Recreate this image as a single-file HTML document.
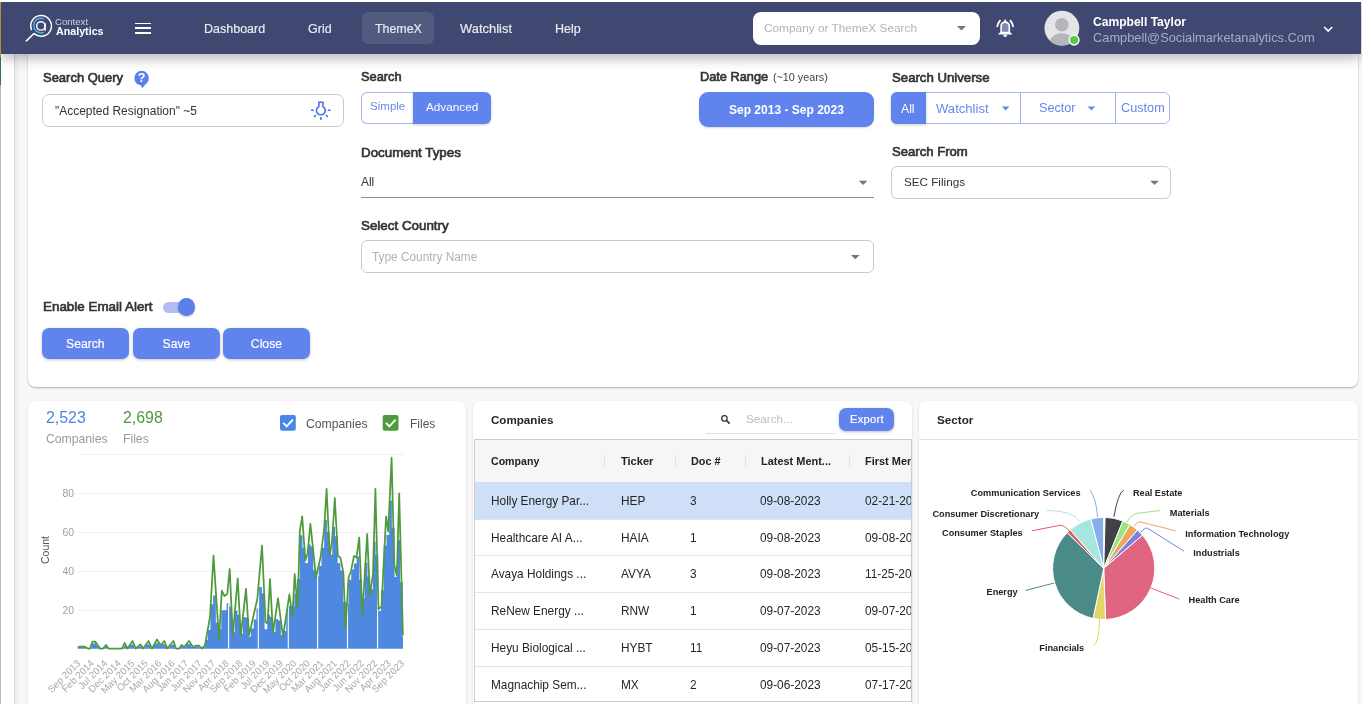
<!DOCTYPE html>
<html><head><meta charset="utf-8">
<style>
*{box-sizing:border-box;margin:0;padding:0}
html,body{width:1362px;height:704px;overflow:hidden}
body{position:relative;background:#f8f8f8;font-family:"Liberation Sans",sans-serif;color:#333}
.a{position:absolute}
.t{position:absolute;line-height:1;white-space:nowrap;will-change:transform}
.m{-webkit-text-stroke:0.18px currentColor}
.card{position:absolute;background:#fff;border-radius:8px;box-shadow:0 1px 3px rgba(0,0,0,0.12)}
svg{position:absolute;left:0;top:0;overflow:visible;will-change:transform}
</style></head><body>

<div class="a" style="left:0px;top:0px;width:1px;height:704px;background:#b9b9b9"></div>
<div class="a" style="left:0px;top:2px;width:1px;height:55px;background:#c9a640"></div>
<div class="a" style="left:0px;top:57px;width:1px;height:28px;background:#2e7a4a"></div>
<div class="a" style="left:1px;top:0px;width:13px;height:704px;background:#fff"></div>
<div class="a" style="left:14px;top:0px;width:1px;height:704px;background:#dcdcdc"></div>
<div class="a" style="left:15px;top:0px;width:13px;height:704px;background:linear-gradient(90deg,#ececec,#f5f5f5 35%,#f8f8f8)"></div>
<div class="card" style="left:28px;top:30px;width:1330px;height:357px;box-shadow:0 1px 2px rgba(0,0,0,0.3)"></div>
<div class="card" style="left:28px;top:401px;width:438px;height:320px"></div>
<div class="card" style="left:473px;top:401px;width:439px;height:320px"></div>
<div class="card" style="left:919px;top:401px;width:439px;height:320px"></div>
<div class="a" style="left:1px;top:2px;width:1360px;height:52px;background:#404872;box-shadow:0 3px 13px rgba(0,0,0,0.33)"></div>
<div class="a" style="left:0px;top:0px;width:1362px;height:2px;background:#fff"></div>
<svg width="1362" height="704" style="pointer-events:none">
<path d="M31.66,30.14 A10.35,10.35 0 1 1 34.21,33.63" fill="none" stroke="#fff" stroke-width="1.45"/>
<path d="M44.07,32.27 A7.3,7.3 0 1 1 44.07,18.93" fill="none" stroke="#4fb0f0" stroke-width="1.5"/>
<circle cx="40.9" cy="25.9" r="4.2" fill="none" stroke="#fff" stroke-width="1.45"/>
<path d="M45.1,23.2 V30.8" stroke="#fff" stroke-width="1.45"/>
<path d="M34.0,33.5 L26.4,40.9" stroke="#fff" stroke-width="1.6" stroke-linecap="round"/>
</svg>
<div class="t " style="left:55.20px;top:17.27px;font-size:9.6px;color:#cfd1de;">Context</div>
<div class="t " style="left:55.50px;top:26.24px;font-size:10.7px;color:#ffffff;font-weight:700;">Analytics</div>
<div class="a" style="left:135px;top:22.6px;width:16px;height:1.9px;background:#fff"></div>
<div class="a" style="left:135px;top:27.4px;width:16px;height:1.9px;background:#fff"></div>
<div class="a" style="left:135px;top:31.9px;width:16px;height:1.9px;background:#fff"></div>
<div class="a" style="left:362px;top:12px;width:72px;height:32px;background:rgba(255,255,255,0.1);border-radius:6px"></div>
<div class="t m" style="left:204.30px;top:23.02px;font-size:12.5px;color:#e9eaf0;">Dashboard</div>
<div class="t m" style="left:308.00px;top:23.02px;font-size:12.5px;color:#e9eaf0;">Grid</div>
<div class="t m" style="left:374.80px;top:23.10px;font-size:12.4px;color:#e9eaf0;">ThemeX</div>
<div class="t m" style="left:460.00px;top:22.64px;font-size:12.95px;color:#e9eaf0;">Watchlist</div>
<div class="t m" style="left:554.70px;top:23.02px;font-size:12.5px;color:#e9eaf0;">Help</div>
<div class="a" style="left:753px;top:12px;width:227px;height:32.5px;background:#fff;border-radius:8px"></div>
<div class="t " style="left:763.70px;top:22.99px;font-size:11.83px;color:#b3b3b3;">Company or ThemeX Search</div>
<svg width="1362" height="704"><path d="M957,26 L966,26 L961.5,30.5 Z" fill="#777"/></svg>
<svg width="1362" height="704">
<path d="M1001.1,33 V26.6 C1001.1,23.9 1002.9,22.3 1005.2,22.3 C1007.5,22.3 1009.3,23.9 1009.3,26.6 V33 Z" fill="#8588ad" stroke="#fff" stroke-width="1.6"/>
<path d="M1001.1,32.4 L998.9,33.9 H1011.5 L1009.3,32.4 Z" fill="#fff" stroke="#fff" stroke-width="1.2" stroke-linejoin="round"/>
<path d="M1004,21.9 L1005.2,19.6 L1006.4,21.9 Z" fill="#fff" stroke="#fff" stroke-width="0.8"/>
<path d="M1003.6,35.1 A1.6,1.6 0 0 0 1006.8,35.1 Z" fill="#fff" stroke="#fff" stroke-width="0.6"/>
<path d="M1000,20.6 Q998.1,22.9 997.3,26.4" fill="none" stroke="#fff" stroke-width="1.8" stroke-linecap="round"/>
<path d="M1010.4,20.6 Q1012.3,22.9 1013.1,26.4" fill="none" stroke="#fff" stroke-width="1.8" stroke-linecap="round"/>
</svg>
<svg width="1362" height="704">
<defs><clipPath id="avc"><circle cx="1061.9" cy="28.2" r="17.4"/></clipPath></defs>
<circle cx="1061.9" cy="28.2" r="17.4" fill="#e4e5e7"/>
<g clip-path="url(#avc)">
<circle cx="1061.9" cy="24.8" r="6.8" fill="#b4b6b9"/>
<ellipse cx="1061.9" cy="43.5" rx="12.5" ry="10.2" fill="#b4b6b9"/>
</g>
<circle cx="1074.1" cy="40.1" r="5.6" fill="#fff"/>
<circle cx="1074.1" cy="40.1" r="4.1" fill="#5ac84c"/>
</svg>
<div class="t " style="left:1093.10px;top:15.68px;font-size:12.07px;color:#ffffff;font-weight:700;">Campbell Taylor</div>
<div class="t " style="left:1093.10px;top:31.85px;font-size:12.82px;color:#a8acc4;">Campbell@Socialmarketanalytics.Com</div>
<svg width="1362" height="704"><path d="M1324.2,27 L1328.2,31 L1332.2,27" fill="none" stroke="#fff" stroke-width="1.7"/></svg>
<div class="t " style="left:42.70px;top:72.32px;font-size:12.97px;color:#333333;-webkit-text-stroke:0.65px #333">Search Query</div>
<svg width="1362" height="704">
<circle cx="141.6" cy="78.1" r="7.3" fill="#5b7fea"/>
<path d="M140.4,84.2 L142.2,88.3 L146,83.8 Z" fill="#5b7fea"/>
<text x="141.6" y="82.3" font-family="Liberation Sans" font-weight="700" font-size="12.5" fill="#fff" text-anchor="middle">?</text>
</svg>
<div class="a" style="left:42px;top:93.6px;width:301.5px;height:33px;border:1px solid #c9c9c9;border-radius:7px"></div>
<div class="t " style="left:55.00px;top:104.86px;font-size:11.98px;color:#333;">"Accepted Resignation" ~5</div>
<svg width="1362" height="704" fill="none" stroke="#4d6ff0" stroke-width="1.6">
<path d="M318.9,106.5 V102.3 H322.9 V106.5 A4.4,4.4 0 1 1 318.9,106.5 Z" stroke-linejoin="miter"/>
<path d="M311,110.3 H313.7 M327.9,110.3 H330.6 M320.9,117.1 V120 M315.9,115.1 L314.1,116.9 M325.9,115.1 L327.7,116.9"/>
</svg>
<div class="t " style="left:361.20px;top:70.73px;font-size:12.84px;color:#333333;-webkit-text-stroke:0.65px #333">Search</div>
<div class="a" style="left:361px;top:92.2px;width:52.5px;height:31.5px;border:1px solid #a4b5f4;border-right:none;border-radius:6px 0 0 6px"></div>
<div class="a" style="left:413px;top:92.2px;width:78px;height:31.5px;background:#6183ed;border-radius:0 6px 6px 0;box-shadow:0 1px 3px rgba(0,0,0,0.2)"></div>
<div class="t " style="left:369.70px;top:101.02px;font-size:11.55px;color:#6686ee;">Simple</div>
<div class="t " style="left:425.80px;top:100.86px;font-size:11.74px;color:#fff;">Advanced</div>
<div class="t " style="left:699.80px;top:70.68px;font-size:12.78px;color:#333333;-webkit-text-stroke:0.65px #333">Date Range</div>
<div class="t " style="left:772.60px;top:71.97px;font-size:10.78px;color:#444;">(~10 years)</div>
<div class="a" style="left:699px;top:92px;width:175px;height:35px;background:#6183ed;border-radius:9px;box-shadow:0 1px 2px rgba(0,0,0,0.15)"></div>
<div class="t " style="left:729.00px;top:104.32px;font-size:12.03px;color:#fff;font-weight:700;">Sep 2013 - Sep 2023</div>
<div class="t " style="left:891.50px;top:70.73px;font-size:13.19px;color:#333333;-webkit-text-stroke:0.65px #333">Search Universe</div>
<div class="a" style="left:891px;top:92.3px;width:278.5px;height:31.5px;border:1px solid #a4b5f4;border-radius:6px"></div>
<div class="a" style="left:891px;top:92.3px;width:35px;height:31.5px;background:#6183ed;border-radius:6px 0 0 6px;box-shadow:0 1px 3px rgba(0,0,0,0.2)"></div>
<div class="a" style="left:1020px;top:92.3px;width:1px;height:31.5px;background:#a4b5f4"></div>
<div class="a" style="left:1115px;top:92.3px;width:1px;height:31.5px;background:#a4b5f4"></div>
<div class="t " style="left:901.00px;top:102.67px;font-size:12.2px;color:#fff;">All</div>
<div class="t " style="left:936.00px;top:101.91px;font-size:13.1px;color:#6686ee;">Watchlist</div>
<div class="t " style="left:1039.00px;top:102.28px;font-size:12.66px;color:#6686ee;">Sector</div>
<div class="t " style="left:1120.60px;top:102.24px;font-size:12.71px;color:#6686ee;">Custom</div>
<svg width="1362" height="704" fill="#6686ee"><path d="M1001.8,106.6 H1009.4 L1005.6,110.4 Z"/><path d="M1087.6,106.6 H1095.2 L1091.4,110.4 Z"/></svg>
<div class="t " style="left:361.00px;top:145.70px;font-size:13.35px;color:#333333;-webkit-text-stroke:0.65px #333">Document Types</div>
<div class="t " style="left:361.00px;top:176.94px;font-size:11.88px;color:#333;">All</div>
<div class="a" style="left:361px;top:197px;width:512.7px;height:1px;background:#8e8e8e"></div>
<svg width="1362" height="704" fill="#777"><path d="M858.8,180.8 H867.4 L863.1,185 Z"/><path d="M851,255 H859.6 L855.3,259.3 Z"/><path d="M1150.2,180.8 H1158.8 L1154.5,185 Z"/></svg>
<div class="t " style="left:361.00px;top:219.27px;font-size:13.39px;color:#333333;-webkit-text-stroke:0.65px #333">Select Country</div>
<div class="a" style="left:361px;top:240.4px;width:512.7px;height:32.6px;border:1px solid #cacaca;border-radius:6px"></div>
<div class="t " style="left:372.00px;top:251.97px;font-size:11.85px;color:#b2b2b2;">Type Country Name</div>
<div class="t " style="left:891.60px;top:144.79px;font-size:13.12px;color:#333333;-webkit-text-stroke:0.65px #333">Search From</div>
<div class="a" style="left:891.2px;top:166.3px;width:279.4px;height:32.4px;border:1px solid #cacaca;border-radius:6px"></div>
<div class="t " style="left:903.50px;top:176.21px;font-size:11.68px;color:#333;">SEC Filings</div>
<div class="t " style="left:43.00px;top:299.95px;font-size:13.41px;color:#333333;-webkit-text-stroke:0.65px #333">Enable Email Alert</div>
<div class="a" style="left:163px;top:301.7px;width:27px;height:11.2px;background:#b2bdf5;border-radius:6px"></div>
<div class="a" style="left:177.9px;top:298.4px;width:17.6px;height:17.6px;border-radius:50%;background:#5b7fea;box-shadow:0 1px 2px rgba(0,0,0,0.25)"></div>
<div class="a" style="left:42px;top:328.3px;width:86.7px;height:31.2px;background:#6183ed;border-radius:7px;box-shadow:0 1px 3px rgba(0,0,0,0.22)"></div>
<div class="t m" style="left:42px;top:338.07px;width:86.7px;text-align:center;font-size:12.2px;color:#fff">Search</div>
<div class="a" style="left:132.7px;top:328.3px;width:86.9px;height:31.2px;background:#6183ed;border-radius:7px;box-shadow:0 1px 3px rgba(0,0,0,0.22)"></div>
<div class="t m" style="left:132.7px;top:338.07px;width:86.9px;text-align:center;font-size:12.2px;color:#fff">Save</div>
<div class="a" style="left:223.3px;top:328.3px;width:86.9px;height:31.2px;background:#6183ed;border-radius:7px;box-shadow:0 1px 3px rgba(0,0,0,0.22)"></div>
<div class="t m" style="left:223.3px;top:338.07px;width:86.9px;text-align:center;font-size:12.2px;color:#fff">Close</div>
<div class="t " style="left:46.20px;top:409.94px;font-size:15.9px;color:#4a86e8;">2,523</div>
<div class="t " style="left:122.70px;top:409.94px;font-size:15.9px;color:#4c9a3b;">2,698</div>
<div class="t " style="left:46.20px;top:433.37px;font-size:12.2px;color:#9b9b9b;">Companies</div>
<div class="t " style="left:122.70px;top:433.37px;font-size:12.2px;color:#9b9b9b;">Files</div>
<svg width="1362" height="704">
<rect x="280" y="415" width="15.8" height="15.8" rx="2" fill="#4a86e8"/>
<path d="M283.2,422.9 L286.7,426.4 L292.9,419.6" fill="none" stroke="#fff" stroke-width="1.9"/>
<rect x="382.7" y="415" width="15.8" height="15.8" rx="2" fill="#4c9a3b"/>
<path d="M385.9,422.9 L389.4,426.4 L395.6,419.6" fill="none" stroke="#fff" stroke-width="1.9"/>
</svg>
<div class="t " style="left:306.00px;top:417.57px;font-size:12.2px;color:#555;">Companies</div>
<div class="t " style="left:409.50px;top:417.76px;font-size:11.98px;color:#555;">Files</div>
<svg width="1362" height="704" font-family="Liberation Sans">
<path d="M77.8,454.5 H403.5" stroke="#efefef" stroke-width="1"/><path d="M77.8,493.5 H403.5" stroke="#efefef" stroke-width="1"/><path d="M77.8,532.5 H403.5" stroke="#efefef" stroke-width="1"/><path d="M77.8,571.5 H403.5" stroke="#efefef" stroke-width="1"/><path d="M77.8,610.5 H403.5" stroke="#efefef" stroke-width="1"/><text x="74" y="497.1" text-anchor="end" font-size="10.4" fill="#9e9e9e">80</text><text x="74" y="536.1" text-anchor="end" font-size="10.4" fill="#9e9e9e">60</text><text x="74" y="575.1" text-anchor="end" font-size="10.4" fill="#9e9e9e">40</text><text x="74" y="614.1" text-anchor="end" font-size="10.4" fill="#9e9e9e">20</text>
<text transform="translate(48.6,550) rotate(-90)" text-anchor="middle" font-size="10.5" fill="#555">Count</text>
<defs><clipPath id="bclip"><path d="M77.7,648.7 L77.70,647.3 L80.41,647.3 L80.41,646.9 L83.12,646.9 L83.12,647.1 L85.82,647.1 L85.82,648.2 L88.53,648.2 L88.53,647.9 L91.24,647.9 L91.24,643.6 L93.95,643.6 L93.95,643.3 L96.66,643.3 L96.66,646.1 L99.37,646.1 L99.37,648.5 L102.07,648.5 L102.07,647.9 L104.78,647.9 L104.78,646.8 L107.49,646.8 L107.49,648.5 L110.20,648.5 L110.20,648.5 L112.91,648.5 L112.91,648.5 L115.62,648.5 L115.62,648.5 L118.32,648.5 L118.32,648.5 L121.03,648.5 L121.03,647.4 L123.74,647.4 L123.74,645.9 L126.45,645.9 L126.45,648.0 L129.16,648.0 L129.16,645.1 L131.87,645.1 L131.87,644.4 L134.57,644.4 L134.57,648.2 L137.28,648.2 L137.28,646.5 L139.99,646.5 L139.99,646.6 L142.70,646.6 L142.70,647.4 L145.41,647.4 L145.41,644.6 L148.12,644.6 L148.12,644.3 L150.82,644.3 L150.82,647.8 L153.53,647.8 L153.53,644.3 L156.24,644.3 L156.24,642.9 L158.95,642.9 L158.95,645.3 L161.66,645.3 L161.66,643.9 L164.37,643.9 L164.37,645.3 L167.08,645.3 L167.08,647.2 L169.78,647.2 L169.78,644.7 L172.49,644.7 L172.49,644.4 L175.20,644.4 L175.20,648.5 L177.91,648.5 L177.91,648.0 L180.62,648.0 L180.62,646.6 L183.33,646.6 L183.33,646.5 L186.03,646.5 L186.03,644.0 L188.74,644.0 L188.74,644.0 L191.45,644.0 L191.45,646.9 L194.16,646.9 L194.16,646.4 L196.87,646.4 L196.87,646.2 L199.58,646.2 L199.58,647.6 L202.28,647.6 L202.28,646.9 L204.99,646.9 L204.99,640.1 L207.70,640.1 L207.70,629.9 L210.41,629.9 L210.41,604.3 L213.12,604.3 L213.12,595.6 L215.83,595.6 L215.83,622.4 L218.53,622.4 L218.53,629.0 L221.24,629.0 L221.24,610.2 L223.95,610.2 L223.95,610.3 L226.66,610.3 L226.66,603.3 L229.37,603.3 L229.37,606.8 L232.08,606.8 L232.08,632.3 L234.78,632.3 L234.78,610.8 L237.49,610.8 L237.49,614.7 L240.20,614.7 L240.20,633.8 L242.91,633.8 L242.91,617.3 L245.62,617.3 L245.62,617.4 L248.33,617.4 L248.33,636.5 L251.03,636.5 L251.03,628.4 L253.74,628.4 L253.74,619.6 L256.45,619.6 L256.45,608.4 L259.16,608.4 L259.16,587.1 L261.87,587.1 L261.87,593.3 L264.58,593.3 L264.58,629.2 L267.28,629.2 L267.28,614.8 L269.99,614.8 L269.99,616.8 L272.70,616.8 L272.70,631.7 L275.41,631.7 L275.41,618.9 L278.12,618.9 L278.12,620.5 L280.83,620.5 L280.83,635.1 L283.53,635.1 L283.53,630.9 L286.24,630.9 L286.24,610.6 L288.95,610.6 L288.95,606.3 L291.66,606.3 L291.66,606.3 L294.37,606.3 L294.37,593.8 L297.08,593.8 L297.08,579.1 L299.78,579.1 L299.78,535.3 L302.49,535.3 L302.49,547.8 L305.20,547.8 L305.20,563.0 L307.91,563.0 L307.91,544.5 L310.62,544.5 L310.62,546.4 L313.32,546.4 L313.32,570.3 L316.03,570.3 L316.03,576.2 L318.74,576.2 L318.74,565.9 L321.45,565.9 L321.45,547.8 L324.16,547.8 L324.16,519.8 L326.87,519.8 L326.87,531.7 L329.57,531.7 L329.57,554.7 L332.28,554.7 L332.28,527.0 L334.99,527.0 L334.99,536.2 L337.70,536.2 L337.70,563.3 L340.41,563.3 L340.41,570.5 L343.12,570.5 L343.12,601.9 L345.82,601.9 L345.82,603.7 L348.53,603.7 L348.53,579.7 L351.24,579.7 L351.24,569.5 L353.95,569.5 L353.95,563.6 L356.66,563.6 L356.66,556.4 L359.37,556.4 L359.37,579.8 L362.07,579.8 L362.07,598.6 L364.78,598.6 L364.78,562.8 L367.49,562.8 L367.49,576.6 L370.20,576.6 L370.20,589.2 L372.91,589.2 L372.91,541.7 L375.62,541.7 L375.62,555.2 L378.32,555.2 L378.32,610.9 L381.03,610.9 L381.03,590.3 L383.74,590.3 L383.74,545.6 L386.45,545.6 L386.45,535.1 L389.16,535.1 L389.16,500.5 L391.87,500.5 L391.87,527.7 L394.57,527.7 L394.57,576.9 L397.28,576.9 L397.28,540.2 L399.99,540.2 L399.99,582.2 L402.70,582.2 L402.70,637.0 L403.00,637.0 L403,648.7 Z"/></clipPath></defs>
<path d="M77.7,648.7 L77.70,647.3 L80.41,647.3 L80.41,646.9 L83.12,646.9 L83.12,647.1 L85.82,647.1 L85.82,648.2 L88.53,648.2 L88.53,647.9 L91.24,647.9 L91.24,643.6 L93.95,643.6 L93.95,643.3 L96.66,643.3 L96.66,646.1 L99.37,646.1 L99.37,648.5 L102.07,648.5 L102.07,647.9 L104.78,647.9 L104.78,646.8 L107.49,646.8 L107.49,648.5 L110.20,648.5 L110.20,648.5 L112.91,648.5 L112.91,648.5 L115.62,648.5 L115.62,648.5 L118.32,648.5 L118.32,648.5 L121.03,648.5 L121.03,647.4 L123.74,647.4 L123.74,645.9 L126.45,645.9 L126.45,648.0 L129.16,648.0 L129.16,645.1 L131.87,645.1 L131.87,644.4 L134.57,644.4 L134.57,648.2 L137.28,648.2 L137.28,646.5 L139.99,646.5 L139.99,646.6 L142.70,646.6 L142.70,647.4 L145.41,647.4 L145.41,644.6 L148.12,644.6 L148.12,644.3 L150.82,644.3 L150.82,647.8 L153.53,647.8 L153.53,644.3 L156.24,644.3 L156.24,642.9 L158.95,642.9 L158.95,645.3 L161.66,645.3 L161.66,643.9 L164.37,643.9 L164.37,645.3 L167.08,645.3 L167.08,647.2 L169.78,647.2 L169.78,644.7 L172.49,644.7 L172.49,644.4 L175.20,644.4 L175.20,648.5 L177.91,648.5 L177.91,648.0 L180.62,648.0 L180.62,646.6 L183.33,646.6 L183.33,646.5 L186.03,646.5 L186.03,644.0 L188.74,644.0 L188.74,644.0 L191.45,644.0 L191.45,646.9 L194.16,646.9 L194.16,646.4 L196.87,646.4 L196.87,646.2 L199.58,646.2 L199.58,647.6 L202.28,647.6 L202.28,646.9 L204.99,646.9 L204.99,640.1 L207.70,640.1 L207.70,629.9 L210.41,629.9 L210.41,604.3 L213.12,604.3 L213.12,595.6 L215.83,595.6 L215.83,622.4 L218.53,622.4 L218.53,629.0 L221.24,629.0 L221.24,610.2 L223.95,610.2 L223.95,610.3 L226.66,610.3 L226.66,603.3 L229.37,603.3 L229.37,606.8 L232.08,606.8 L232.08,632.3 L234.78,632.3 L234.78,610.8 L237.49,610.8 L237.49,614.7 L240.20,614.7 L240.20,633.8 L242.91,633.8 L242.91,617.3 L245.62,617.3 L245.62,617.4 L248.33,617.4 L248.33,636.5 L251.03,636.5 L251.03,628.4 L253.74,628.4 L253.74,619.6 L256.45,619.6 L256.45,608.4 L259.16,608.4 L259.16,587.1 L261.87,587.1 L261.87,593.3 L264.58,593.3 L264.58,629.2 L267.28,629.2 L267.28,614.8 L269.99,614.8 L269.99,616.8 L272.70,616.8 L272.70,631.7 L275.41,631.7 L275.41,618.9 L278.12,618.9 L278.12,620.5 L280.83,620.5 L280.83,635.1 L283.53,635.1 L283.53,630.9 L286.24,630.9 L286.24,610.6 L288.95,610.6 L288.95,606.3 L291.66,606.3 L291.66,606.3 L294.37,606.3 L294.37,593.8 L297.08,593.8 L297.08,579.1 L299.78,579.1 L299.78,535.3 L302.49,535.3 L302.49,547.8 L305.20,547.8 L305.20,563.0 L307.91,563.0 L307.91,544.5 L310.62,544.5 L310.62,546.4 L313.32,546.4 L313.32,570.3 L316.03,570.3 L316.03,576.2 L318.74,576.2 L318.74,565.9 L321.45,565.9 L321.45,547.8 L324.16,547.8 L324.16,519.8 L326.87,519.8 L326.87,531.7 L329.57,531.7 L329.57,554.7 L332.28,554.7 L332.28,527.0 L334.99,527.0 L334.99,536.2 L337.70,536.2 L337.70,563.3 L340.41,563.3 L340.41,570.5 L343.12,570.5 L343.12,601.9 L345.82,601.9 L345.82,603.7 L348.53,603.7 L348.53,579.7 L351.24,579.7 L351.24,569.5 L353.95,569.5 L353.95,563.6 L356.66,563.6 L356.66,556.4 L359.37,556.4 L359.37,579.8 L362.07,579.8 L362.07,598.6 L364.78,598.6 L364.78,562.8 L367.49,562.8 L367.49,576.6 L370.20,576.6 L370.20,589.2 L372.91,589.2 L372.91,541.7 L375.62,541.7 L375.62,555.2 L378.32,555.2 L378.32,610.9 L381.03,610.9 L381.03,590.3 L383.74,590.3 L383.74,545.6 L386.45,545.6 L386.45,535.1 L389.16,535.1 L389.16,500.5 L391.87,500.5 L391.87,527.7 L394.57,527.7 L394.57,576.9 L397.28,576.9 L397.28,540.2 L399.99,540.2 L399.99,582.2 L402.70,582.2 L402.70,637.0 L403.00,637.0 L403,648.7 Z" fill="#4f88e0"/>
<g clip-path="url(#bclip)"><path d="M228.6,450 V649" stroke="#fff" stroke-width="1.1"/><path d="M258.3,450 V649" stroke="#fff" stroke-width="1.1"/><path d="M288.3,450 V649" stroke="#fff" stroke-width="1.1"/><path d="M317.6,450 V649" stroke="#fff" stroke-width="1.1"/><path d="M347.5,450 V649" stroke="#fff" stroke-width="1.1"/><path d="M377.6,450 V649" stroke="#fff" stroke-width="1.1"/></g>
<polyline points="77.7,647.5 80.0,646.5 84.0,646.5 88.0,648.5 90.0,648.5 92.5,641.5 95.2,641.5 100.0,648.5 103.0,648.5 106.0,645.0 108.5,648.5 122.0,648.5 124.5,643.0 127.5,648.5 132.6,641.0 135.7,648.5 140.5,644.5 143.0,648.5 148.6,641.0 152.0,648.5 157.0,639.5 160.5,645.0 164.5,641.0 167.0,648.5 173.5,641.0 176.0,648.5 179.0,648.5 181.6,645.0 184.0,647.0 189.0,641.0 193.0,647.0 196.0,645.5 199.0,645.5 202.0,648.5 205.0,645.0 210.0,617.0 213.5,555.6 219.0,640.0 221.8,590.7 224.5,596.0 227.3,594.0 229.7,569.0 232.8,635.7 237.7,578.5 240.8,635.7 246.0,588.9 249.0,635.7 257.3,599.0 262.0,545.5 265.5,622.0 267.6,623.5 270.0,579.0 273.0,632.6 278.0,598.4 283.0,637.0 289.4,594.4 292.4,617.0 294.7,574.0 297.6,607.8 299.8,531.5 302.2,516.3 305.3,560.5 307.7,552.9 310.4,523.9 316.0,577.3 320.5,557.5 324.2,528.5 326.6,488.8 329.7,555.9 332.1,540.7 334.8,498.0 337.9,556.0 340.3,557.5 343.4,572.7 345.5,629.0 348.6,577.3 351.0,571.2 354.0,556.0 356.5,557.5 359.2,537.6 362.3,615.4 367.2,534.0 369.9,595.6 373.0,574.2 375.4,488.8 378.5,609.3 381.5,606.3 386.1,516.3 388.2,531.5 391.6,457.7 394.3,565.0 396.8,575.8 399.2,493.4 402.9,635.2" fill="none" stroke="#4e9a3c" stroke-width="1.75" stroke-linejoin="round"/>
<text transform="translate(81.1,663.9) rotate(-45)" text-anchor="end" font-size="9.7" fill="#a8a8a8">Sep 2013</text><text transform="translate(94.6,663.9) rotate(-45)" text-anchor="end" font-size="9.7" fill="#a8a8a8">Feb 2014</text><text transform="translate(108.1,663.9) rotate(-45)" text-anchor="end" font-size="9.7" fill="#a8a8a8">Jul 2014</text><text transform="translate(121.6,663.9) rotate(-45)" text-anchor="end" font-size="9.7" fill="#a8a8a8">Dec 2014</text><text transform="translate(135.1,663.9) rotate(-45)" text-anchor="end" font-size="9.7" fill="#a8a8a8">May 2015</text><text transform="translate(148.6,663.9) rotate(-45)" text-anchor="end" font-size="9.7" fill="#a8a8a8">Oct 2015</text><text transform="translate(162.1,663.9) rotate(-45)" text-anchor="end" font-size="9.7" fill="#a8a8a8">Mar 2016</text><text transform="translate(175.6,663.9) rotate(-45)" text-anchor="end" font-size="9.7" fill="#a8a8a8">Aug 2016</text><text transform="translate(189.1,663.9) rotate(-45)" text-anchor="end" font-size="9.7" fill="#a8a8a8">Jan 2017</text><text transform="translate(202.6,663.9) rotate(-45)" text-anchor="end" font-size="9.7" fill="#a8a8a8">Jun 2017</text><text transform="translate(216.1,663.9) rotate(-45)" text-anchor="end" font-size="9.7" fill="#a8a8a8">Nov 2017</text><text transform="translate(229.6,663.9) rotate(-45)" text-anchor="end" font-size="9.7" fill="#a8a8a8">Apr 2018</text><text transform="translate(243.1,663.9) rotate(-45)" text-anchor="end" font-size="9.7" fill="#a8a8a8">Sep 2018</text><text transform="translate(256.6,663.9) rotate(-45)" text-anchor="end" font-size="9.7" fill="#a8a8a8">Feb 2019</text><text transform="translate(270.1,663.9) rotate(-45)" text-anchor="end" font-size="9.7" fill="#a8a8a8">Jul 2019</text><text transform="translate(283.6,663.9) rotate(-45)" text-anchor="end" font-size="9.7" fill="#a8a8a8">Dec 2019</text><text transform="translate(297.1,663.9) rotate(-45)" text-anchor="end" font-size="9.7" fill="#a8a8a8">May 2020</text><text transform="translate(310.6,663.9) rotate(-45)" text-anchor="end" font-size="9.7" fill="#a8a8a8">Oct 2020</text><text transform="translate(324.1,663.9) rotate(-45)" text-anchor="end" font-size="9.7" fill="#a8a8a8">Mar 2021</text><text transform="translate(337.6,663.9) rotate(-45)" text-anchor="end" font-size="9.7" fill="#a8a8a8">Aug 2021</text><text transform="translate(351.1,663.9) rotate(-45)" text-anchor="end" font-size="9.7" fill="#a8a8a8">Jan 2022</text><text transform="translate(364.6,663.9) rotate(-45)" text-anchor="end" font-size="9.7" fill="#a8a8a8">Jun 2022</text><text transform="translate(378.1,663.9) rotate(-45)" text-anchor="end" font-size="9.7" fill="#a8a8a8">Nov 2022</text><text transform="translate(391.6,663.9) rotate(-45)" text-anchor="end" font-size="9.7" fill="#a8a8a8">Apr 2023</text><text transform="translate(405.1,663.9) rotate(-45)" text-anchor="end" font-size="9.7" fill="#a8a8a8">Sep 2023</text>
</svg>
<div class="t " style="left:491.40px;top:414.48px;font-size:11.6px;color:#262626;font-weight:700;">Companies</div>
<svg width="1362" height="704"><circle cx="724.4" cy="418.4" r="2.7" fill="none" stroke="#333" stroke-width="1.25"/><path d="M726.4,420.4 L729.6,423.6" stroke="#333" stroke-width="1.6"/></svg>
<div class="t " style="left:746.00px;top:413.30px;font-size:11.69px;color:#bdbdbd;">Search...</div>
<div class="a" style="left:706px;top:432.5px;width:129px;height:1px;background:#e6dede"></div>
<div class="a" style="left:839px;top:407.7px;width:55px;height:23.4px;background:#6183ed;border-radius:7px;box-shadow:0 1px 3px rgba(0,0,0,0.25)"></div>
<div class="t m" style="left:849.70px;top:413.92px;font-size:11.2px;color:#fff;letter-spacing:0.25px">Export</div>
<div class="a" style="left:473.5px;top:439px;width:438.5px;height:262.5px;border:1px solid #c9ccd6;background:#fff;overflow:hidden"></div>
<div class="a" style="left:474.5px;top:440px;width:436.5px;height:42px;background:#f6f6f6"></div>
<div class="t " style="left:490.50px;top:455.93px;font-size:10.6px;color:#222;font-weight:700;">Company</div>
<div class="t " style="left:621.00px;top:455.54px;font-size:11.06px;color:#222;font-weight:700;">Ticker</div>
<div class="t " style="left:691.00px;top:455.73px;font-size:10.83px;color:#222;font-weight:700;">Doc #</div>
<div class="t " style="left:760.70px;top:455.62px;font-size:10.96px;color:#222;font-weight:700;">Latest Ment...</div>
<div class="t " style="left:865.40px;top:455.62px;font-size:10.96px;color:#222;font-weight:700;overflow:hidden;width:45.6px">First Mentions</div>
<div class="a" style="left:604.4px;top:455px;width:1px;height:12px;background:#e2e2e2"></div>
<div class="a" style="left:674.6px;top:455px;width:1px;height:12px;background:#e2e2e2"></div>
<div class="a" style="left:744.7px;top:455px;width:1px;height:12px;background:#e2e2e2"></div>
<div class="a" style="left:848.6px;top:455px;width:1px;height:12px;background:#e2e2e2"></div>
<div class="a" style="left:474.5px;top:482px;width:436.5px;height:36.5px;background:#cedff7"></div>
<div class="t " style="left:490.60px;top:495.97px;font-size:11.85px;color:#262626;">Holly Energy Par...</div>
<div class="t " style="left:621.20px;top:495.97px;font-size:11.85px;color:#262626;">HEP</div>
<div class="t " style="left:690.40px;top:495.97px;font-size:11.85px;color:#262626;">3</div>
<div class="t " style="left:760.20px;top:495.97px;font-size:11.85px;color:#262626;">09-08-2023</div>
<div class="t " style="left:865.00px;top:495.97px;font-size:11.85px;color:#262626;overflow:hidden;width:46.0px">02-21-2012</div>
<div class="a" style="left:474.5px;top:518.7px;width:436.5px;height:1px;background:#e1e4ea"></div>
<div class="t " style="left:490.60px;top:532.69px;font-size:11.85px;color:#262626;">Healthcare AI A...</div>
<div class="t " style="left:621.20px;top:532.69px;font-size:11.85px;color:#262626;">HAIA</div>
<div class="t " style="left:690.40px;top:532.69px;font-size:11.85px;color:#262626;">1</div>
<div class="t " style="left:760.20px;top:532.69px;font-size:11.85px;color:#262626;">09-08-2023</div>
<div class="t " style="left:865.00px;top:532.69px;font-size:11.85px;color:#262626;overflow:hidden;width:46.0px">09-08-2023</div>
<div class="a" style="left:474.5px;top:555.4px;width:436.5px;height:1px;background:#e1e4ea"></div>
<div class="t " style="left:490.60px;top:569.41px;font-size:11.85px;color:#262626;">Avaya Holdings ...</div>
<div class="t " style="left:621.20px;top:569.41px;font-size:11.85px;color:#262626;">AVYA</div>
<div class="t " style="left:690.40px;top:569.41px;font-size:11.85px;color:#262626;">3</div>
<div class="t " style="left:760.20px;top:569.41px;font-size:11.85px;color:#262626;">09-08-2023</div>
<div class="t " style="left:865.00px;top:569.41px;font-size:11.85px;color:#262626;overflow:hidden;width:46.0px">11-25-2016</div>
<div class="a" style="left:474.5px;top:592.2px;width:436.5px;height:1px;background:#e1e4ea"></div>
<div class="t " style="left:490.60px;top:606.13px;font-size:11.85px;color:#262626;">ReNew Energy ...</div>
<div class="t " style="left:621.20px;top:606.13px;font-size:11.85px;color:#262626;">RNW</div>
<div class="t " style="left:690.40px;top:606.13px;font-size:11.85px;color:#262626;">1</div>
<div class="t " style="left:760.20px;top:606.13px;font-size:11.85px;color:#262626;">09-07-2023</div>
<div class="t " style="left:865.00px;top:606.13px;font-size:11.85px;color:#262626;overflow:hidden;width:46.0px">09-07-2023</div>
<div class="a" style="left:474.5px;top:628.9px;width:436.5px;height:1px;background:#e1e4ea"></div>
<div class="t " style="left:490.60px;top:642.85px;font-size:11.85px;color:#262626;">Heyu Biological ...</div>
<div class="t " style="left:621.20px;top:642.85px;font-size:11.85px;color:#262626;">HYBT</div>
<div class="t " style="left:690.40px;top:642.85px;font-size:11.85px;color:#262626;">11</div>
<div class="t " style="left:760.20px;top:642.85px;font-size:11.85px;color:#262626;">09-07-2023</div>
<div class="t " style="left:865.00px;top:642.85px;font-size:11.85px;color:#262626;overflow:hidden;width:46.0px">05-15-2023</div>
<div class="a" style="left:474.5px;top:665.6px;width:436.5px;height:1px;background:#e1e4ea"></div>
<div class="t " style="left:490.60px;top:679.57px;font-size:11.85px;color:#262626;">Magnachip Sem...</div>
<div class="t " style="left:621.20px;top:679.57px;font-size:11.85px;color:#262626;">MX</div>
<div class="t " style="left:690.40px;top:679.57px;font-size:11.85px;color:#262626;">2</div>
<div class="t " style="left:760.20px;top:679.57px;font-size:11.85px;color:#262626;">09-06-2023</div>
<div class="t " style="left:865.00px;top:679.57px;font-size:11.85px;color:#262626;overflow:hidden;width:46.0px">07-17-2013</div>
<div class="t " style="left:936.80px;top:413.70px;font-size:11.7px;color:#262626;font-weight:700;">Sector</div>
<div class="a" style="left:919px;top:439px;width:439px;height:1px;background:#e2e2e2"></div>
<svg width="1362" height="704" font-family="Liberation Sans"><path d="M1103.7,568.4 L1105.13,517.32 A51.1,51.1 0 0 1 1122.84,521.02 Z" fill="#414148" stroke="#fff" stroke-width="1" stroke-linejoin="round"/><path d="M1103.7,568.4 L1122.84,521.02 A51.1,51.1 0 0 1 1130.02,524.60 Z" fill="#9ae57e" stroke="#fff" stroke-width="1" stroke-linejoin="round"/><path d="M1103.7,568.4 L1130.02,524.60 A51.1,51.1 0 0 1 1137.56,530.13 Z" fill="#eea65f" stroke="#fff" stroke-width="1" stroke-linejoin="round"/><path d="M1103.7,568.4 L1137.56,530.13 A51.1,51.1 0 0 1 1142.56,535.21 Z" fill="#7c80e6" stroke="#fff" stroke-width="1" stroke-linejoin="round"/><path d="M1103.7,568.4 L1142.56,535.21 A51.1,51.1 0 0 1 1105.48,619.47 Z" fill="#e06580" stroke="#fff" stroke-width="1" stroke-linejoin="round"/><path d="M1103.7,568.4 L1105.48,619.47 A51.1,51.1 0 0 1 1093.08,618.38 Z" fill="#e0d66a" stroke="#fff" stroke-width="1" stroke-linejoin="round"/><path d="M1103.7,568.4 L1093.08,618.38 A51.1,51.1 0 0 1 1067.25,532.58 Z" fill="#4a8b89" stroke="#fff" stroke-width="1" stroke-linejoin="round"/><path d="M1103.7,568.4 L1067.25,532.58 A51.1,51.1 0 0 1 1070.18,529.83 Z" fill="#e05c5c" stroke="#fff" stroke-width="1" stroke-linejoin="round"/><path d="M1103.7,568.4 L1070.18,529.83 A51.1,51.1 0 0 1 1090.91,518.93 Z" fill="#a6e6df" stroke="#fff" stroke-width="1" stroke-linejoin="round"/><path d="M1103.7,568.4 L1090.91,518.93 A51.1,51.1 0 0 1 1103.70,517.30 Z" fill="#86aee8" stroke="#fff" stroke-width="1" stroke-linejoin="round"/><path d="M1090.2,490.2 Q1096,498 1097.6,516.9" fill="none" stroke="#86aee8" stroke-width="1"/><path d="M1046.9,510.5 Q1073,510.5 1079.7,521.5" fill="none" stroke="#a6e6df" stroke-width="1"/><path d="M1031.7,530.8 L1060.5,525.2 Q1064,525 1070.9,532.6" fill="none" stroke="#e05c5c" stroke-width="1"/><path d="M1025.6,590.4 L1054.2,583" fill="none" stroke="#4a8b89" stroke-width="1"/><path d="M1123.6,490.2 Q1118,493 1113.9,516.9" fill="none" stroke="#414148" stroke-width="1"/><path d="M1160,510.5 L1136,513.5 Q1131,515 1126.8,522.1" fill="none" stroke="#9ae57e" stroke-width="1"/><path d="M1175.7,530.8 L1140,521.8 Q1137.5,521.5 1134.2,526.2" fill="none" stroke="#eea65f" stroke-width="1"/><path d="M1184,551.1 L1147.5,528.3 Q1144.5,527 1140.6,532.6" fill="none" stroke="#7c80e6" stroke-width="1"/><path d="M1179.4,599.1 L1150.8,588" fill="none" stroke="#e06580" stroke-width="1"/><path d="M1093.3,646.2 Q1099,643 1099.6,619.2" fill="none" stroke="#e0d66a" stroke-width="1"/><text x="970.8" y="496.2" font-size="9.2" font-weight="700" fill="#222">Communication Services</text><text x="932.4" y="516.6" font-size="9.2" font-weight="700" fill="#222">Consumer Discretionary</text><text x="942" y="536.3" font-size="9.2" font-weight="700" fill="#222">Consumer Staples</text><text x="986.5" y="594.6" font-size="9.2" font-weight="700" fill="#222">Energy</text><text x="1132.9" y="496.2" font-size="9.2" font-weight="700" fill="#222">Real Estate</text><text x="1169.8" y="516.2" font-size="9.2" font-weight="700" fill="#222">Materials</text><text x="1185.3" y="536.5" font-size="9.2" font-weight="700" fill="#222">Information Technology</text><text x="1193.3" y="556.2" font-size="9.2" font-weight="700" fill="#222">Industrials</text><text x="1188.6" y="603.0" font-size="9.2" font-weight="700" fill="#222">Health Care</text><text x="1039.3" y="650.6" font-size="9.2" font-weight="700" fill="#222">Financials</text></svg>
</body></html>
